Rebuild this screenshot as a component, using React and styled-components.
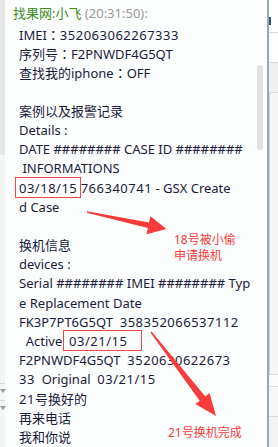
import React from 'react';
import styled, { createGlobalStyle } from 'styled-components';

const GlobalStyle = createGlobalStyle`
  html, body {
    margin: 0;
    padding: 0;
    background: #fcfdfd;
  }
  body {
    font-family: 'Noto Sans', 'Noto Sans CJK SC', sans-serif;
  }
`;

const lines = [
  { text: 'IMEI：352063062267333' },
  { text: '序列号：F2PNWDF4G5QT' },
  { text: '查找我的iphone：OFF' },
  { text: '' },
  { text: '案例以及报警记录' },
  { text: 'Details :' },
  { text: 'DATE ######## CASE ID ########' },
  { text: ' INFORMATIONS' },
  { box: '03/18/15', text: ' 766340741 - GSX Create', boxSize: 'small' },
  { text: 'd Case' },
  { text: '' },
  { text: '换机信息' },
  { text: 'devices :' },
  { text: 'Serial ######## IMEI ######## Typ' },
  { text: 'e Replacement Date' },
  { text: 'FK3P7PT6G5QT  358352066537112' },
  { pre: '  Active  ', box: '03/21/15', text: '', boxSize: 'wide' },
  { text: 'F2PNWDF4G5QT  3520630622673' },
  { text: '33  Original  03/21/15' },
  { text: '21号换好的' },
  { text: '再来电话' },
  { text: '我和你说' },
];

// digits in the original font run a little wider than in Noto Sans,
// and the full-width colon sits centred in its cell
const formatText = (str) =>
  str.split(/([\d/]{2,}|：)/).map((part, i) => {
    if (part === '：') return <Colon key={i}>{part}</Colon>;
    if (/^[\d/]{2,}$/.test(part)) return <Digits key={i}>{part}</Digits>;
    return part;
  });

function App() {
  return (
    <>
      <GlobalStyle />
      <Frame>
        <LeftRail>
          <RailTop />
          <RailSpacer />
          <RailArrow />
          <RailArrow />
          <RailBottom />
        </LeftRail>

        <ChatArea>
          <Messages>
            <Header>
              <Sender>找果网:小飞</Sender>
              <Time> (20:31:50):</Time>
            </Header>
            <Body>
              {lines.map((l, i) => (
                <Line key={i}>
                  {l.pre}
                  {l.box && (
                    <Boxed size={l.boxSize}>
                      <Digits>{l.box}</Digits>
                    </Boxed>
                  )}
                  {formatText(l.text)}
                </Line>
              ))}
            </Body>
          </Messages>

          <ScrollTrack>
            <Thumb />
          </ScrollTrack>

          <Annotations>
            <svg width="260" height="447" viewBox="0 0 260 447">
              <polygon
                fill="#fa3b3b"
                points="87.1,211.2 148.9,222.6 150.4,216.2 166.5,229 146.4,234.3 147.9,227.9 86.9,212.8"
              />
              <polygon
                fill="#fa3b3b"
                points="151.6,331.6 205.3,396.5 209.6,393.1 216,416 195.4,404.1 199.7,400.7 150.4,332.4"
              />
            </svg>
            <Note style={{ left: 174, top: 232 }}>18号被小偷</Note>
            <Note style={{ left: 174, top: 248 }}>申请换机</Note>
            <Note style={{ left: 168, top: 425 }}>21号换机完成</Note>
          </Annotations>
        </ChatArea>

        <Divider />

        <SidePanel>
          <SideCell h={33} bg="#ffffff">
            <SideMark />
          </SideCell>
          <SideCell h={30} bg="#fdfdfd" />
          <SideCell h={30} bg="#f0f0f0" />
          <SideCell h={282} bg="#f5f5f5" inner />
          <SideCell h={12} bg="#fbfbfb" />
          <SideCell h={30} bg="#f7f7f7" />
          <SideCell h={30} bg="#f3f3f3" last />
        </SidePanel>
      </Frame>
    </>
  );
}

export default App;

const Frame = styled.div`
  display: flex;
  width: 278px;
  height: 447px;
  overflow: hidden;
  background: #fcfdfd;
`;

const LeftRail = styled.div`
  display: flex;
  flex-direction: column;
  width: 5px;
  flex-shrink: 0;
  background: #f3f4f4;
`;

const RailTop = styled.div`
  height: 155px;
  background: #e6e7e7;
`;

const RailSpacer = styled.div`
  flex: 1;
`;

const RailBottom = styled.div`
  height: 30px;
`;

const RailArrow = styled.div`
  height: 16px;
  border-top: 1px solid #d8d8d8;
  &::after {
    content: '';
    display: block;
    margin-top: 5px;
    width: 0;
    height: 0;
    border-left: 3px solid transparent;
    border-right: 3px solid transparent;
    border-top: 4px solid #9a9a9a;
  }
`;

const ChatArea = styled.div`
  position: relative;
  flex: 1;
  display: flex;
  min-width: 0;
`;

const Messages = styled.div`
  flex: 1;
  padding: 4px 0 0 8px;
  min-width: 0;
`;

const Header = styled.div`
  font-size: 13px;
  line-height: 18px;
  white-space: pre;
`;

const Sender = styled.span`
  color: #3a8b19;
`;

const Time = styled.span`
  color: #9a9a9a;
`;

const Body = styled.div`
  padding: 3px 0 0 6px;
  color: #1b1b3c;
  font-size: 13px;
`;

const Line = styled.div`
  height: 19.2px;
  line-height: 19.2px;
  white-space: pre;
`;

const Digits = styled.span`
  letter-spacing: 0.5px;
`;

const Colon = styled.span`
  font-family: 'Noto Sans CJK TC', 'Noto Sans CJK SC', sans-serif;
`;

const Boxed = styled.span`
  position: relative;
  &::after {
    content: '';
    position: absolute;
    top: -2px;
    bottom: -1px;
    left: ${(p) => (p.size === 'wide' ? '-6px' : '-4px')};
    right: ${(p) => (p.size === 'wide' ? '-15px' : '-4px')};
    border: 1px solid #f04848;
  }
`;

const ScrollTrack = styled.div`
  width: 10px;
  flex-shrink: 0;
  padding-top: 65px;
  box-sizing: border-box;
`;

const Thumb = styled.div`
  width: 6px;
  height: 85px;
  border-radius: 3px;
  background: #e1e1e1;
`;

const Annotations = styled.div`
  position: absolute;
  inset: 0;
  pointer-events: none;
  svg {
    position: absolute;
    left: -5px;
    top: 0;
  }
`;

const Note = styled.div`
  position: absolute;
  color: #fa3b3b;
  font-size: 12px;
  line-height: 15px;
  white-space: nowrap;
  margin-left: -5px;
`;

const Divider = styled.div`
  width: 2px;
  flex-shrink: 0;
  background: #93a8bf;
`;

const SidePanel = styled.div`
  width: 9px;
  flex-shrink: 0;
  display: flex;
  flex-direction: column;
`;

const SideCell = styled.div`
  height: ${(p) => p.h}px;
  background: ${(p) => p.bg};
  border-bottom: ${(p) => (p.last ? 'none' : '1px solid #dcdcdc')};
  border-left: ${(p) => (p.inner ? '1px solid #d6d6d6' : 'none')};
  box-sizing: border-box;
  flex-shrink: 0;
`;

const SideMark = styled.div`
  width: 2px;
  height: 8px;
  margin-top: 17px;
  background: #2e5a7a;
`;
